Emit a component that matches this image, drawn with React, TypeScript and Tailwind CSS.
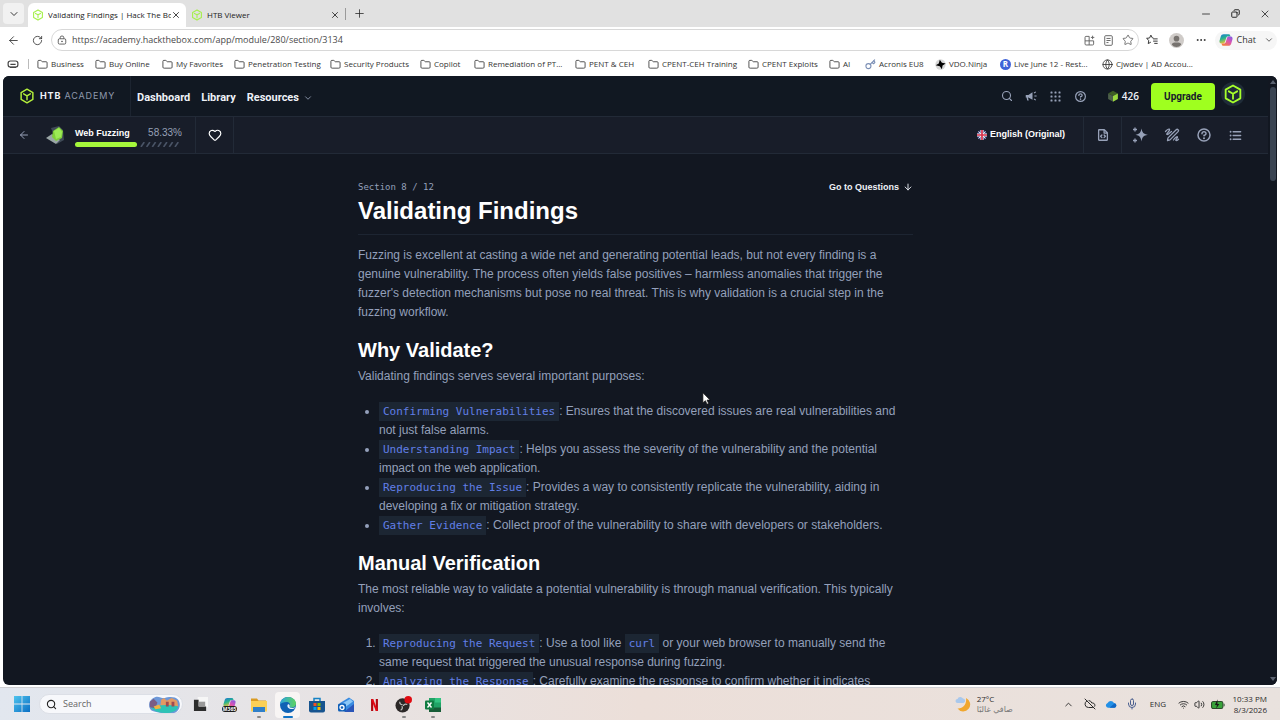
import React from "react";
import {
  ArrowDown,
  ArrowLeft,
  ChevronDown,
  ChevronUp,
  CloudOff,
  Copy,
  Ellipsis,
  Folder,
  Globe,
  Heart,
  Key,
  Mic,
  Minus,
  Plus,
  RotateCw,
  Search,
  Star,
  Volume2,
  Wifi,
  X,
} from "lucide-react";
import { PiFileCodeBold, PiListBulletsBold, PiQuestionBold } from "react-icons/pi";

const chromeFont = "font-['Open_Sans','Noto_Sans',sans-serif]";

function Cube({ className }: { className: string }) {
  return (
    <svg viewBox="0 0 24 24" className={className} fill="none" stroke="currentColor" strokeWidth="2.2" strokeLinejoin="round" strokeLinecap="round" aria-hidden="true">
      <path d="M12 1.8 20.8 6.8v10.4L12 22.2l-8.800-5V6.800z" />
      <path d="M7 8.800l5 2.900 5-2.900M12 11.700v6" />
    </svg>
  );
}

function Tab({ title, active, className }: { title: string; active?: boolean; className: string }) {
  return (
    <div className={`flex items-center self-stretch ${active ? "rounded-t-md bg-white" : ""} ${className}`}>
      <Cube className="size-3 shrink-0 text-[#a6f04c]" />
      <span className="ml-1 flex-1 overflow-hidden whitespace-nowrap text-[8px] text-[#222]">{title}</span>
      <button aria-label={`Close ${title}`} className="shrink-0">
        <X className="size-[10px]" strokeWidth={2} />
      </button>
    </div>
  );
}

function TabStrip() {
  return (
    <div className="flex h-[27px] shrink-0 items-center bg-[#e1e1e1] text-[9px] text-[#222]">
      <button aria-label="Tab actions" className="ml-[3px] flex h-[21px] w-[21px] items-center justify-center rounded bg-[#f1f1f1]">
        <ChevronDown className="size-3" strokeWidth={1.8} />
      </button>
      <div className="mt-[3px] flex h-6">
        <Tab title="Validating Findings | Hack The Box" active className="ml-1 w-[158px] pl-[4px] pr-[5px]" />
        <Tab title="HTB Viewer" className="w-[154px] pl-[5px]" />
      </div>
      <span className="ml-[5px] h-3 w-px bg-[#9a9a9a]" />
      <button aria-label="New tab" className="ml-[7px]">
        <Plus className="size-[13px]" strokeWidth={1.4} />
      </button>
      <div className="ml-auto flex items-center gap-[19px] pr-[9px]">
        <button aria-label="Minimize"><Minus className="size-3" strokeWidth={1.6} /></button>
        <button aria-label="Restore"><Copy className="size-[9px] rotate-90" strokeWidth={2.6} /></button>
        <button aria-label="Close window"><X className="size-3" strokeWidth={1.6} /></button>
      </div>
    </div>
  );
}

function CopilotMark({ className }: { className: string }) {
  return (
    <svg viewBox="0 0 24 24" className={className} aria-hidden="true">
      <defs>
        <linearGradient id="cpA" x1="0" y1="0" x2="0.4" y2="1">
          <stop offset="0" stopColor="#1b74d6" />
          <stop offset="0.5" stopColor="#27b48f" />
          <stop offset="1" stopColor="#f2c230" />
        </linearGradient>
        <linearGradient id="cpB" x1="1" y1="0" x2="0.3" y2="1">
          <stop offset="0" stopColor="#7a5ce8" />
          <stop offset="0.5" stopColor="#d954b4" />
          <stop offset="1" stopColor="#f47a3c" />
        </linearGradient>
      </defs>
      <path fill="url(#cpA)" d="M8 2h8.500c1.400 0 2.200.8 2.600 2l.5 2H15c-1.300 0-2 .8-2.400 2l-2.400 7.500C9.600 17 9 18 7.500 18H4c-3 0-3.700-2.600-3-5l2-7C3.800 3.400 5.400 2 8 2z" />
      <path fill="url(#cpB)" d="M16 22H7.500c-1.400 0-2.200-.8-2.600-2l-.5-2H9c1.300 0 2-.8 2.400-2l2.400-7.500C14.400 7 15 6 16.500 6H20c3 0 3.700 2.600 3 5l-2 7c-.8 2.600-2.400 4-5 4z" />
    </svg>
  );
}

function Toolbar() {
  return (
    <div className="flex h-[26px] shrink-0 items-center bg-white text-[9px] text-[#333]">
      <button aria-label="Back" className="ml-[7px]"><ArrowLeft className="size-[13px]" strokeWidth={1.6} /></button>
      <button aria-label="Refresh" className="ml-3"><RotateCw className="size-[11px]" strokeWidth={1.8} /></button>
      <div className="ml-2 flex h-[22px] flex-1 items-center rounded-full border border-[#d8d8d8] pl-[5px] pr-1 text-[#666]">
        <svg viewBox="0 0 16 16" className="size-[10px]" fill="none" stroke="#555" strokeWidth="1.400" aria-hidden="true">
          <rect x="2" y="6" width="12" height="8.500" rx="2" />
          <path d="M5 6V4.500a3 3 0 0 1 6 0V6" />
          <circle cx="8" cy="10.200" r=".7" fill="#444" />
        </svg>
        <input aria-label="Address" className="ml-[5px] min-w-0 flex-1 bg-transparent text-[#4a4a4a] outline-none" defaultValue="https://academy.hackthebox.com/app/module/280/section/3134" />
        <div className="flex items-center gap-2">
          <svg viewBox="0 0 16 16" className="size-[11px]" fill="none" stroke="#666" strokeWidth="1.400" aria-hidden="true">
            <path d="M7.500 2H3a1.500 1.500 0 0 0-1.500 1.500V13A1.500 1.500 0 0 0 3 14.500h9.500A1.500 1.500 0 0 0 14 13V8.500H1.500M7.500 2v12.500M12.500 1v5M10 3.500h5" />
          </svg>
          <svg viewBox="0 0 16 16" className="size-[11px]" fill="none" stroke="#666" strokeWidth="1.400" aria-hidden="true">
            <rect x="2.500" y="1" width="11" height="14" rx="1.500" />
            <path d="M5 5h6M5 8h6M5 11h3" />
          </svg>
          <Star className="size-3 text-[#666]" strokeWidth={1.8} />
        </div>
      </div>
      <svg viewBox="0 0 16 16" className="ml-[7px] size-3" fill="none" stroke="#333" strokeWidth="1.300" strokeLinejoin="round" aria-hidden="true">
        <path d="M10 5.500 8.300 5 6.500 1.500 4.800 5.300.8 5.800l2.900 2.800L3 12.800l3.500-2M9.500 6.500h6M9.500 9.500h6M11 12.500h4.500" />
      </svg>
      <svg viewBox="0 0 16 16" className="ml-[11px] size-[15px]" aria-hidden="true">
        <circle cx="8" cy="8" r="8" fill="#cfcbc8" />
        <circle cx="8" cy="6" r="3" fill="#77736f" />
        <path d="M3 12.500C3 10.500 4.500 10 8 10s5 .5 5 2.500A7 7 0 0 1 8 15a7 7 0 0 1-5-2.500z" fill="#77736f" />
      </svg>
      <button aria-label="Settings and more" className="ml-[11px]"><Ellipsis className="size-3" strokeWidth={2} /></button>
      <button className="ml-2 mr-[3px] flex h-[19px] items-center rounded-full bg-[#f6f6f6] pl-1 pr-[3px]">
        <CopilotMark className="size-[14px]" />
        <span className="ml-1">Chat</span>
        <ChevronDown className="ml-2 size-[10px]" strokeWidth={1.8} />
      </button>
    </div>
  );
}

const bookmarks = [
  { label: "Business", kind: "folder", width: "w-[58px]" },
  { label: "Buy Online", kind: "folder", width: "w-[67px]" },
  { label: "My Favorites", kind: "folder", width: "w-[72px]" },
  { label: "Penetration Testing", kind: "folder", width: "w-[96px]" },
  { label: "Security Products", kind: "folder", width: "w-[90px]" },
  { label: "Copilot", kind: "folder", width: "w-[54px]" },
  { label: "Remediation of PT...", kind: "folder", width: "w-[101px]" },
  { label: "PENT & CEH", kind: "folder", width: "w-[73px]" },
  { label: "CPENT-CEH Training", kind: "folder", width: "w-[100px]" },
  { label: "CPENT Exploits", kind: "folder", width: "w-[81px]" },
  { label: "AI", kind: "folder", width: "w-[36px]" },
  { label: "Acronis EU8", kind: "key", width: "w-[70px]" },
  { label: "VDO.Ninja", kind: "ninja", width: "w-[65px]" },
  { label: "Live June 12 - Rest...", kind: "badge", width: "w-[102px]" },
  { label: "Cjwdev | AD Accou...", kind: "globe", width: "w-[100px]" },
];

function BookmarkIcon({ kind }: { kind: string }) {
  if (kind === "key") return <Key className="size-[11px] shrink-0 text-[#7b8fb5]" strokeWidth={2.4} />;
  if (kind === "globe") return <Globe className="size-[11px] shrink-0" strokeWidth={1.8} />;
  if (kind === "ninja")
    return (
      <svg viewBox="0 0 16 16" className="size-[11px] shrink-0" aria-hidden="true">
        <circle cx="8" cy="8" r="7.500" fill="#d7d7d7" />
        <path fill="#000" d="M7 1l3 4.500 5.500 1L11 9.500 10 15 7 10.500 1 9l4.500-2.500z" />
      </svg>
    );
  if (kind === "badge")
    return (
      <span className="flex size-[11px] shrink-0 items-center justify-center rounded-full bg-[#3f63d8] text-[8px] font-bold leading-none text-white">R</span>
    );
  return <Folder className="size-[11px] shrink-0" strokeWidth={1.8} />;
}

function Bookmarks() {
  return (
    <nav aria-label="Favorites" className="flex h-[22px] shrink-0 items-center bg-white text-[8px] text-[#333]">
      <svg viewBox="0 0 16 16" className="ml-[7px] size-3" fill="none" stroke="#444" strokeWidth="1.600" aria-hidden="true">
        <rect x="1.500" y="4" width="13" height="8" rx="3" />
        <path d="M4.500 8.500h7M4 12.500h8" />
      </svg>
      <span className="mx-[9px] h-[10px] w-px bg-[#bbb]" />
      {bookmarks.map((b) => (
        <a key={b.label} href="#" className={`-ml-px mr-px flex shrink-0 items-center gap-[3px] whitespace-nowrap ${b.width}`}>
          <BookmarkIcon kind={b.kind} />
          {b.label}
        </a>
      ))}
    </nav>
  );
}

function SiteHeader() {
  return (
    <header className="flex h-[41px] shrink-0 items-center border-b border-[#222a37] bg-[#111822] text-[10px] font-bold text-[#eef1f7]">
      <a href="#" className="flex h-full w-[128px] items-center border-r border-[#1c2430] pl-4 font-['Inter',sans-serif] text-[9px]">
        <Cube className="size-4 text-[#b4f03c]" />
        <span className="ml-[5px] tracking-widest">HTB</span>
        <span className="ml-[3px] font-normal tracking-widest text-[#8f98ad]">ACADEMY</span>
      </a>
      <nav className="flex items-center gap-[11px] pl-[6px] pt-1 text-[11px] font-['Roboto',sans-serif]">
        <a href="#">Dashboard</a>
        <a href="#">Library</a>
        <a href="#" className="flex items-center gap-1">
          Resources <ChevronDown className="size-[10px] text-[#97a1b8]" strokeWidth={2} />
        </a>
      </nav>
      <div className="ml-auto flex items-center pr-[23px] text-[#97a1b8]">
        <button aria-label="Search"><Search className="size-3" strokeWidth={2.2} /></button>
        <button aria-label="News" className="ml-3">
          <svg viewBox="0 0 16 16" className="size-3" fill="currentColor" aria-hidden="true">
            <path d="M1 6.500h3.500L10 3v10L4.500 10H4l1 4H3L2 10H1z" />
            <path d="M12 4l2.500-1.500M12.500 8h3M12 12l2.500 1.500" stroke="currentColor" strokeWidth="1.500" />
          </svg>
        </button>
        <button aria-label="Apps" className="ml-[13px]">
          <svg viewBox="0 0 11 11" className="size-[11px]" fill="currentColor" aria-hidden="true">
            {[1, 5, 9].map((y) => [1, 5, 9].map((x) => <rect key={`${x}-${y}`} x={x - 0.500} y={y - 0.500} width="2" height="2" rx=".5" />))}
          </svg>
        </button>
        <button aria-label="Help" className="ml-[13px]"><PiQuestionBold className="size-[13px]" /></button>
        <svg viewBox="0 0 16 16" className="ml-5 size-3" aria-hidden="true">
          <path fill="#3e5c26" d="M8 1l6.500 3.500L8 8 1.500 4.500z" />
          <path fill="#4d5f4a" d="M1.500 4.500 8 8v7.500L1.500 12z" />
          <path fill="#9ad83f" d="M14.500 4.500 8 8v7.500l6.500-3.500z" />
        </svg>
        <span className="ml-[3px] font-['Open_Sans',sans-serif] text-[10px] font-semibold text-[#eef1f7]">426</span>
        <button className="ml-3 flex h-[27px] w-16 items-center justify-center rounded-sm bg-[#9fff1f] text-[10px] text-[#16202c] font-['Roboto',sans-serif]">Upgrade</button>
        <button aria-label="Account" className="mb-1 ml-[6px] flex size-6 items-center justify-center rounded-full bg-[#1f2c38]">
          <Cube className="size-5 text-[#a6ff2b]" />
        </button>
      </div>
    </header>
  );
}

function ModuleBar() {
  return (
    <div className="flex h-[37px] shrink-0 items-stretch border-b border-[#222a37] bg-[#181d29] text-[10px] text-[#97a1b8]">
      <div className="flex w-[193px] items-center border-r border-[#222a37] pl-[15px]">
        <button aria-label="Back to module"><ArrowLeft className="size-3" strokeWidth={2} /></button>
        <svg viewBox="0 0 20 20" className="ml-[15px] size-5" aria-hidden="true">
          <path fill="#3f4a56" d="M6 3l8-2 4 4 1 10-7 4z" />
          <path fill="#9aa6a6" d="M1 13l6-4 8 6-4 4z" />
          <path fill="#7fce3a" d="M8 6l6-4 4 4-1 7-6 3-4-4z" />
          <path fill="#9cea55" d="M9 6l5-3 3 4-1 5-5 2z" />
        </svg>
        <div className="ml-[10px] flex w-[107px] flex-col gap-[3px] pt-1">
          <div className="flex items-center justify-between leading-3">
            <span className="text-[9px] font-bold text-white">Web Fuzzing</span>
            <span>58.33%</span>
          </div>
          <div className="flex h-[5px] items-center" role="progressbar" aria-label="Module progress" aria-valuenow={58.33}>
            <span className="h-[5px] rounded-full bg-[#a5f73b]" style={{ width: "58.33%" }} />
            <svg viewBox="0 0 44 5" className="ml-[3px] h-[5px] flex-1" stroke="#4a5467" strokeWidth="1.800" aria-hidden="true">
              {[0, 1, 2, 3, 4, 5, 6].map((i) => (
                <path key={i} d={`M${i * 6 + 1} 5l3.500-5`} />
              ))}
            </svg>
          </div>
        </div>
      </div>
      <button aria-label="Favorite" className="flex w-[38px] items-center justify-center border-r border-[#222a37] text-white">
        <Heart className="size-[14px]" strokeWidth={2} />
      </button>
      <div className="ml-auto flex items-stretch">
        <button className="flex items-center gap-[3px] pr-[18px] text-[9px] font-bold text-white">
          <svg viewBox="0 0 20 20" className="size-[10px]" aria-hidden="true">
            <circle cx="10" cy="10" r="10" fill="#3c4a86" />
            <path d="M3 3l14 14M17 3L3 17" stroke="#e9e6ee" strokeWidth="2" />
            <path d="M10 0v20M0 10h20" stroke="#f4f1f4" strokeWidth="6" />
            <path d="M10 0v20M0 10h20" stroke="#d6304a" strokeWidth="3.400" />
          </svg>
          English (Original)
        </button>
        <button aria-label="Source" className="flex w-[39px] items-center justify-center border-x border-[#222a37]"><PiFileCodeBold className="size-[14px]" /></button>
        <div className="flex items-center gap-4 pl-[10px] pr-[25px]">
          <button aria-label="Assistant">
            <svg viewBox="0 0 16 16" className="size-4" fill="currentColor" aria-hidden="true">
              <path d="M9.500 1.500c.9 4.300 1.800 5.300 6.300 6.300-4.500 1-5.400 2-6.300 6.700C8.600 9.800 7.700 8.800 3.500 7.800c4.200-1 5.100-2 6-6.300z" />
              <path d="M3 .5v4M1 2.500h4M3 11.500v4M1 13.500h4" stroke="currentColor" strokeWidth="1.300" />
            </svg>
          </button>
          <button aria-label="Annotate">
            <svg viewBox="0 0 16 16" className="size-4" fill="none" stroke="currentColor" strokeWidth="1.300" strokeLinejoin="round" strokeLinecap="round" aria-hidden="true">
              <path d="M3.500 13.500l.5-2.600 8.200-8.200a1.200 1.200 0 0 1 1.900 1.900L6 12.900z" />
              <path d="M1.500 4.500c1.500-2 4.500-3.500 4-1.500S1.800 7 3 7.500 6 5.500 7.500 4.500M9.500 13c1-1.500 3.500-4 4-3s-2.500 3-1.500 3.500c.8.4 1.800-.6 2.500-1.200" />
            </svg>
          </button>
          <button aria-label="Help"><PiQuestionBold className="size-4" /></button>
          <button aria-label="Contents"><PiListBulletsBold className="size-[15px]" /></button>
        </div>
      </div>
    </div>
  );
}

function Chip({ children }: { children: React.ReactNode }) {
  return (
    <code className="bg-[#1c2633] px-1 py-[3px] font-['DejaVu_Sans_Mono',monospace] text-[11px] leading-none text-[#617fe6]">{children}</code>
  );
}

function Article() {
  return (
    <article className="mx-auto w-[555px] pt-[25px] text-[12px] leading-[19px] text-[#94a0bb]">
      <div className="flex items-center justify-between">
        <span className="font-['DejaVu_Sans_Mono',monospace] text-[9px] leading-4">Section 8 / 12</span>
        <a href="#" className="flex items-center gap-1 text-[9px] font-bold leading-4 text-[#eef1f7]">
          Go to Questions <ArrowDown className="size-[10px]" strokeWidth={2.2} />
        </a>
      </div>
      <h1 className="border-b border-[#1d2532] pb-[7px] text-[24px] font-bold leading-8 text-white">Validating Findings</h1>
      <p className="mt-[11px] max-w-[540px]">
        Fuzzing is excellent at casting a wide net and generating potential leads, but not every finding is a genuine vulnerability. The process often yields false positives – harmless anomalies that trigger the fuzzer's detection mechanisms but pose no real threat. This is why validation is a crucial step in the fuzzing workflow.
      </p>
      <h2 className="mb-[3px] mt-[14px] text-[20px] font-bold leading-7 text-white">Why Validate?</h2>
      <p>Validating findings serves several important purposes:</p>
      <ul className="mt-4 list-disc pl-[21px]">
        <li><Chip>Confirming Vulnerabilities</Chip>: Ensures that the discovered issues are real vulnerabilities and not just false alarms.</li>
        <li><Chip>Understanding Impact</Chip>: Helps you assess the severity of the vulnerability and the potential impact on the web application.</li>
        <li><Chip>Reproducing the Issue</Chip>: Provides a way to consistently replicate the vulnerability, aiding in developing a fix or mitigation strategy.</li>
        <li><Chip>Gather Evidence</Chip>: Collect proof of the vulnerability to share with developers or stakeholders.</li>
      </ul>
      <h2 className="mb-[3px] mt-[14px] text-[20px] font-bold leading-7 text-white">Manual Verification</h2>
      <p className="max-w-[540px]">The most reliable way to validate a potential vulnerability is through manual verification. This typically involves:</p>
      <ol className="mt-4 list-decimal pl-[21px]">
        <li><Chip>Reproducing the Request</Chip>: Use a tool like <Chip>curl</Chip> or your web browser to manually send the same request that triggered the unusual response during fuzzing.</li>
        <li><Chip>Analyzing the Response</Chip>: Carefully examine the response to confirm whether it indicates</li>
      </ol>
    </article>
  );
}

function AppSlot({ label, active, running, children }: { label: string; active?: boolean; running?: boolean; children: React.ReactNode }) {
  return (
    <button aria-label={label} className={`relative flex h-[26px] w-[25px] items-center justify-center rounded ${active ? "bg-[#f8f5f4]" : ""}`}>
      {children}
      {active && <span className="absolute bottom-0 h-[2px] w-[10px] rounded bg-[#1173c5]" />}
      {running && <span className="absolute bottom-0 h-[2px] w-1 rounded bg-[#888]" />}
    </button>
  );
}

function Taskbar() {
  return (
    <footer className="flex h-[33px] shrink-0 items-center border-t border-[#cfcfd3] bg-linear-to-r from-[#e2e7ef] via-[#ecdfd9] to-[#e9e2de] text-[9px] text-[#2b2b2b]">
      <button aria-label="Start" className="ml-[14px]">
        <svg viewBox="0 0 16 16" className="size-4" aria-hidden="true">
          <defs>
            <linearGradient id="winG" x1="0" y1="0" x2="1" y2="1">
              <stop offset="0" stopColor="#4fc4ee" />
              <stop offset="1" stopColor="#0a6fc4" />
            </linearGradient>
          </defs>
          <path fill="url(#winG)" d="M0 0h7.600v7.600H0zM8.400 0H16v7.600H8.400zM0 8.400h7.600V16H0zM8.400 8.400H16V16H8.400z" />
        </svg>
      </button>
      <label className="ml-[9px] flex h-5 w-[144px] items-center rounded-full border border-[#dcdfe6] bg-[#f7f8fb] pl-[6px] pr-px">
        <Search className="size-[11px] text-[#222]" strokeWidth={2.4} />
        <input aria-label="Search" placeholder="Search" className="ml-[6px] w-16 bg-transparent outline-none placeholder:text-[#666]" />
        <svg viewBox="0 0 34 18" className="ml-auto h-[17px] w-[34px]" aria-hidden="true">
          <path fill="#6d98d8" d="M8 1C12 0 15 3 18 2s11-2 14 2 2 10-2 13-20 1-25-1S-1 4 8 1z" />
          <path fill="#e39a63" d="M14 4l3-2 3 3 5-3 6 3 1 6H13z" />
          <path fill="#2ec3b5" d="M3 12c7-3 20-3 29-1-1 5-7 7-14 7S6 16 3 12z" />
          <path fill="#7a5d86" d="M2 6l4-3 4 4-2 6-6-1z" />
          <path fill="#f0b243" d="M6 11l6-2 2 4-6 1z" />
          <path fill="#9f4b52" d="M19 6h3v5h-3zM25 6h3v5h-3z" />
        </svg>
      </label>
      <div className="ml-[5px] flex items-center gap-1 pt-px">
        <AppSlot label="Task view">
          <svg viewBox="0 0 16 16" className="size-[15px]" aria-hidden="true">
            <path fill="#f6f6f6" d="M5 0h11v11H5z" />
            <path fill="#2c2c2c" d="M1 3h5v7h8v5H1z" />
            <path fill="#999" d="M6 5h7v5H6z" />
          </svg>
        </AppSlot>
        <AppSlot label="Microsoft 365 Copilot">
          <span className="flex flex-col items-center">
            <CopilotMark className="size-[13px]" />
            <span className="-mt-1 rounded-sm bg-[#1b1b1b] px-px text-[5px] font-bold leading-[6px] text-white">M365</span>
          </span>
        </AppSlot>
        <AppSlot label="File Explorer" running>
          <svg viewBox="0 0 16 16" className="size-4" aria-hidden="true">
            <path fill="#d99b23" d="M0 1.500h6l1.500 2H15V8H0z" />
            <path fill="#fbd057" d="M0 4h16v10.500H0z" />
            <path fill="#2f7fc9" d="M2 10h12v5H2z" />
          </svg>
        </AppSlot>
        <AppSlot label="Microsoft Edge" active>
          <svg viewBox="0 0 16 16" className="size-4" aria-hidden="true">
            <defs>
              <linearGradient id="edgeG" x1="0" y1="0.300" x2="1" y2="0.300">
                <stop offset="0" stopColor="#2aa5dd" />
                <stop offset="1" stopColor="#5fd35f" />
              </linearGradient>
            </defs>
            <circle cx="8" cy="8" r="8" fill="#0f62b5" />
            <path fill="url(#edgeG)" d="M0 7.500C.5 3 4 0 8 0c4.500 0 8 3 8 6.500C16 9 14 10.500 12 10.500c-2 0-2.800-.7-2.300-1.500C10.800 7 9 5 6.500 5 3.500 5 1 6 0 7.500z" />
            <path fill="#e9f3fa" d="M9.700 9c-.8 1 .6 2 2.800 2 1.200 0 2.300-.4 3-.9-.7 1.500-1.800 2-3.700 2C8.500 12 7 10 7.500 8c.4-1 2.200-1 2.200 1z" />
          </svg>
        </AppSlot>
        <AppSlot label="Microsoft Store">
          <svg viewBox="0 0 16 16" className="size-4" aria-hidden="true">
            <path fill="none" stroke="#1682c4" strokeWidth="1.500" d="M5 4.500V1.500h6v3" />
            <path fill="#17548f" d="M0 4h16v9.500a2 2 0 0 1-2 2H2a2 2 0 0 1-2-2z" />
            <path fill="#f25022" d="M4.500 6h3v3h-3z" />
            <path fill="#7fba00" d="M8.500 6h3v3h-3z" />
            <path fill="#00a4ef" d="M4.500 10h3v3h-3z" />
            <path fill="#ffb900" d="M8.500 10h3v3h-3z" />
          </svg>
        </AppSlot>
        <AppSlot label="Outlook">
          <svg viewBox="0 0 16 16" className="size-4" aria-hidden="true">
            <path fill="#3a8be0" d="M2 6l9-5.500L16 4v10H4z" />
            <path fill="#8cc8f7" d="M5 6l7-4 3 2.500-7 5z" />
            <path fill="#2a55b8" d="M6 15l10-8v8z" />
            <rect y="6.500" width="8" height="8" rx="1.500" fill="#0f5fb8" />
            <circle cx="4" cy="10.500" r="2" fill="none" stroke="#fff" strokeWidth="1.300" />
          </svg>
        </AppSlot>
        <AppSlot label="Netflix">
          <svg viewBox="0 0 8 14" className="h-3 w-[7px]" aria-hidden="true">
            <path fill="#b1060f" d="M0 0h2.500v14H0zM5.500 0H8v14H5.500z" />
            <path fill="#e50914" d="M0 0h2.500L8 14H5.500z" />
          </svg>
        </AppSlot>
        <AppSlot label="OBS Studio" running>
          <svg viewBox="0 0 18 18" className="size-[17px]" aria-hidden="true">
            <circle cx="8" cy="10" r="7.500" fill="#2b2727" />
            <path fill="none" stroke="#bbb" strokeWidth="1.300" d="M5 6c0 3 2 3.500 3 3M13 9c-3-1-4 .5-4 1.500M6 15c2.500-1.500 2-3.500 1-4" />
            <circle cx="14" cy="4" r="4" fill="#e00b12" />
          </svg>
        </AppSlot>
        <AppSlot label="Excel" running>
          <svg viewBox="0 0 16 16" className="size-4" aria-hidden="true">
            <path fill="#21a366" d="M4 1h12v14H4z" />
            <path fill="#33c481" d="M10 1h6v4.500h-6z" />
            <path fill="#185c37" d="M4 10.500h12V15H4z" />
            <rect y="3.500" width="9" height="9" rx="1" fill="#107c41" />
            <path d="M2.500 5.500l4 5M6.500 5.500l-4 5" stroke="#fff" strokeWidth="1.400" />
          </svg>
        </AppSlot>
      </div>
      <div className="ml-auto flex items-center">
        <svg viewBox="0 0 16 16" className="size-4" aria-hidden="true">
          <path fill="#f0a72e" d="M11 2a7 7 0 1 1-8.500 10.500C8 13 12 8 11 2z" />
          <path fill="#a9c8ec" d="M2.500 7a2 2 0 0 1 0-4 3 3 0 0 1 5.500-.5A2.300 2.300 0 0 1 8.500 7z" />
        </svg>
        <div className="ml-[6px] w-[86px] text-[8px] leading-[11px]">
          <div>27°C</div>
          <div dir="rtl" className="w-fit text-[#777] font-['DejaVu_Sans',sans-serif]">صافي غالبًا</div>
        </div>
        <button aria-label="Hidden icons"><ChevronUp className="size-[11px]" strokeWidth={2} /></button>
        <CloudOff className="ml-[10px] size-3" strokeWidth={2} />
        <svg viewBox="0 0 16 10" className="ml-[9px] h-2 w-3" aria-hidden="true">
          <path fill="#2390e6" d="M4 10a4 3.500 0 0 1-.5-6.500A5 5 0 0 1 12 3.500 3.300 3.300 0 0 1 12.500 10z" />
          <path fill="#1167c4" d="M6 10l7-6a3.200 3.200 0 0 1 0 6z" />
        </svg>
        <Mic className="ml-[9px] size-3 text-[#4a5f8f]" strokeWidth={2} />
        <span className="ml-3 text-[8px]">ENG</span>
        <Wifi className="ml-3 size-[11px]" strokeWidth={2} />
        <Volume2 className="ml-[5px] size-[11px]" strokeWidth={2} />
        <svg viewBox="0 0 16 12" className="ml-[6px] h-[11px] w-[14px]" aria-hidden="true">
          <rect x="0.600" y="2.600" width="13" height="8" rx="2" fill="#38a33a" stroke="#2b4b2b" strokeWidth="1.200" />
          <path d="M14.500 5h1v3h-1z" fill="#2b4b2b" />
          <path d="M7.500 0L4.500 6.500h2.200L6 10.500l3.500-5H7.300z" fill="#1a1a1a" />
        </svg>
        <div className="ml-[6px] w-9 text-right text-[8px] leading-[11px]">
          <div className="whitespace-nowrap">10:33 PM</div>
          <div>8/3/2026</div>
        </div>
      </div>
      <span className="w-[13px]" />
    </footer>
  );
}

export default function App() {
  return (
    <div className={`flex h-screen flex-col overflow-hidden bg-white ${chromeFont}`}>
      <TabStrip />
      <Toolbar />
      <Bookmarks />
      <main className="relative mx-[3px] mb-[2px] mt-px flex min-h-0 flex-1 overflow-hidden rounded-md bg-[#121721] font-['Liberation_Sans',sans-serif]">
        <div className="flex min-w-0 flex-1 flex-col">
          <SiteHeader />
          <ModuleBar />
          <div className="min-h-0 flex-1 overflow-hidden">
            <Article />
          </div>
        </div>
        <div className="flex w-[9px] flex-col items-center bg-[#121721] py-1">
          <svg viewBox="0 0 6 4" className="h-1 w-[6px]" aria-hidden="true"><path d="M3 0l3 4H0z" fill="#5a6270" /></svg>
          <span className="mt-[3px] h-[94px] w-[6px] rounded-full bg-[#3a4452]" />
          <span className="flex-1" />
          <svg viewBox="0 0 6 4" className="h-1 w-[6px]" aria-hidden="true"><path d="M3 4L0 0h6z" fill="#5a6270" /></svg>
        </div>
        <svg viewBox="0 0 12 18" className="absolute left-[699px] top-[316px] h-[13px] w-[9px]" aria-hidden="true">
          <path d="M1 1v14l3.500-3 2.200 5 2.300-1-2.200-4.800H11z" fill="#fff" stroke="#111" strokeWidth="1" />
        </svg>
      </main>
      <Taskbar />
    </div>
  );
}
